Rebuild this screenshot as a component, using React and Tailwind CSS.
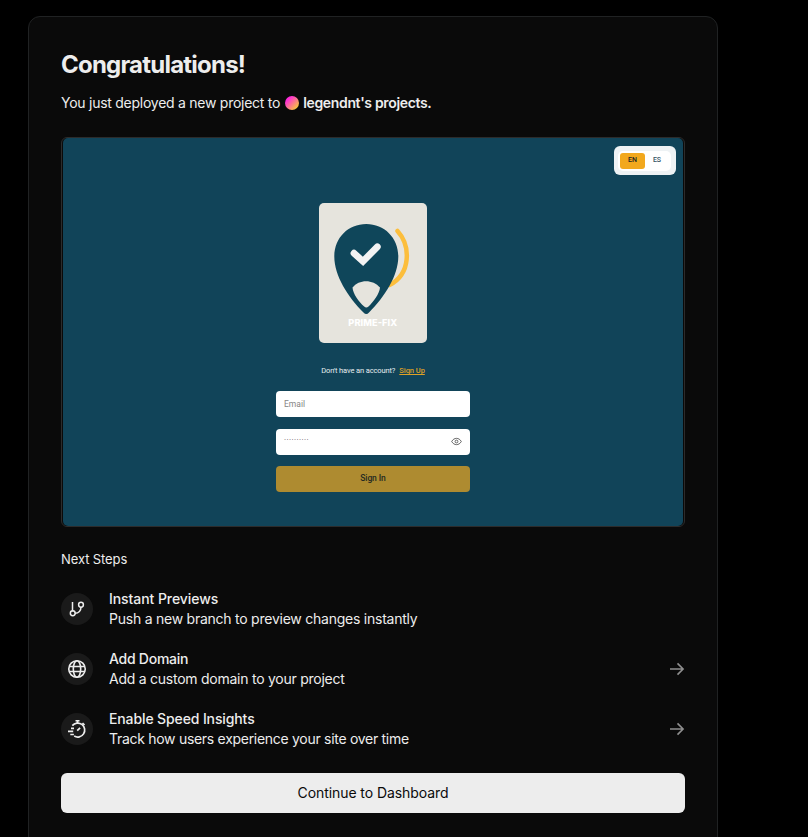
import React from "react";

function BranchIcon() {
  return (
    <svg width="16" height="16" viewBox="0 0 16 16" fill="none" stroke="currentColor" strokeWidth="1.5">
      <path d="M3.5 1v9.5" />
      <circle cx="3.75" cy="12.25" r="2.4" />
      <circle cx="12" cy="3.75" r="2.4" />
      <path d="M12 6C12 9.5 9.8 12.2 6 12.25" />
    </svg>
  );
}

function GlobeIcon() {
  return (
    <svg width="20" height="20" viewBox="0 0 20 20" fill="none" stroke="currentColor" strokeWidth="1.6">
      <circle cx="10" cy="10" r="8.25" />
      <ellipse cx="10" cy="10" rx="3.7" ry="8.25" />
      <path d="M2.3 7.5h15.4M2.3 12.5h15.4" />
    </svg>
  );
}

function StopwatchIcon() {
  return (
    <svg width="20" height="20" viewBox="0 0 20 20" fill="none" stroke="currentColor" strokeWidth="1.7">
      <path d="M8.5 1.75h4M10.5 1.75v2.5M15.5 4l2 2M10.2 11.7l2.9-2.9" />
      <path d="M5.3 6.6A7 7 0 1 1 7.2 17.1" />
      <path d="M4 9.3h3M1 12.3h5.2M3.3 15.5h3.6" />
    </svg>
  );
}

function ArrowIcon() {
  return (
    <svg width="16" height="16" viewBox="0 0 16 16" fill="none" stroke="#8f8f8f" strokeWidth="1.6">
      <path d="M1 8h13.5M8.5 2.4l5.6 5.6-5.6 5.6" />
    </svg>
  );
}

function Logo() {
  return (
    <svg width="108" height="140" viewBox="0 0 108 140" className="block">
      <rect width="108" height="140" rx="5" fill="#e6e4dd" />
      <path d="M78.5 28C92 43 92 71 70.5 82" fill="none" stroke="#fcbe3c" strokeWidth="4.5" strokeLinecap="round" />
      <path d="M47.3 21C29 21 15.3 35 15.3 53.5C15.3 73 29 94 44.5 109.5Q47.3 112.5 50 109.5C65.5 94 79.3 73 79.3 53.5C79.3 35 65.5 21 47.3 21Z" fill="#0f465a" />
      <path d="M35 50.2l9 8.2 14.3-14.6" fill="none" stroke="#f3f3f3" strokeWidth="6.8" strokeLinecap="round" />
      <path d="M33.5 84.5C40 76 54 76 61 84.5C60.5 91 54 99 49.5 103.5Q47.3 105.5 45.2 103.5C40 99 34 91 33.5 84.5Z" fill="#e6e4dd" />
      <text x="53.8" y="122.5" textAnchor="middle" textLength="49" fill="#ffffff" fontFamily="Inter, sans-serif" fontSize="9.2" fontWeight="800">PRIME-FIX</text>
    </svg>
  );
}

const steps = [
  { title: "Instant Previews", text: "Push a new branch to preview changes instantly", icon: <BranchIcon />, arrow: false, titleGap: "tracking-[-0.07px]", textGap: "tracking-[-0.24px]" },
  { title: "Add Domain", text: "Add a custom domain to your project", icon: <GlobeIcon />, arrow: true, titleGap: "tracking-[-0.25px]", textGap: "tracking-[-0.25px]" },
  { title: "Enable Speed Insights", text: "Track how users experience your site over time", icon: <StopwatchIcon />, arrow: true, titleGap: "tracking-[-0.12px]", textGap: "tracking-[-0.29px]" },
];

function Preview() {
  return (
    <div className="mt-[22px] h-[390px] rounded-md border border-[#2c2c2c] px-px">
      <div className="relative flex h-full flex-col items-center overflow-hidden rounded-[5px] bg-[#114459] pt-[65px] font-['Roboto',sans-serif]">
        <div className="absolute right-[7px] top-[8px] flex h-[29px] w-[62px] items-center justify-center rounded-[6px] bg-[#eef2f4]">
          <div className="mr-px flex h-[20px] w-[53px] items-center rounded-[5px] bg-white p-[2px] text-[7px] font-medium">
            <span className="flex h-[16px] w-[25px] items-center justify-center rounded-[3px] bg-[#f2a81d] text-[#222]">EN</span>
            <span className="flex h-[16px] flex-1 items-center justify-center text-[#345464]">ES</span>
          </div>
        </div>
        <Logo />
        <div className="mt-[22px] flex h-[12px] items-center gap-[4px] whitespace-nowrap text-[7.5px] text-[#e6edf0]">
          <span className="tracking-[-0.12px]">Don't have an account?</span>
          <span className="font-medium tracking-[-0.05px] text-[#dfa126] underline">Sign Up</span>
        </div>
        <div className="mt-[14px] flex h-[26px] w-[194px] shrink-0 items-center rounded-[4px] bg-white px-[8px] text-[8.5px] text-[#858585]">Email</div>
        <div className="mt-[11.5px] flex h-[26px] w-[194px] items-center justify-between rounded-[4px] bg-white px-[8px] text-[8px] text-[#555]">
          <span className="-mt-[3px] tracking-[0.4px]">··········</span>
          <svg width="11" height="9" viewBox="0 0 11 9" fill="none" stroke="#555" strokeWidth="0.9">
            <path d="M.7 4.5C3 .3 8 .3 10.3 4.5C8 8.7 3 8.7.7 4.5Z" />
            <circle cx="5.5" cy="4.5" r="1.4" />
          </svg>
        </div>
        <div className="mt-[11.5px] flex h-[26px] w-[194px] items-center justify-center rounded-[4px] bg-[#ae8b30] pb-px text-[8.5px] font-medium tracking-[-0.1px] text-[#252a22]">Sign In</div>
      </div>
    </div>
  );
}

export default function App() {
  return (
    <div className="h-[837px] overflow-hidden bg-black pl-[28px] pt-[16px] font-['Inter',sans-serif] text-[#ededed]">
      <div className="h-[860px] w-[690px] rounded-xl border border-[#202223] bg-[#0a0a0a] p-8">
        <h1 className="h-8 whitespace-nowrap text-2xl font-bold tracking-[-0.78px]">Congratulations!</h1>
        <p className="mt-[10px] flex h-6 items-center whitespace-nowrap text-sm">
          <span className="tracking-[-0.26px]">You just deployed a new project to</span>
          <span className="ml-[5px] mr-1 size-[14px] rounded-full bg-[linear-gradient(135deg,#ff28dc_20%,#f5dc28_95%)]" />
          <span className="font-semibold tracking-[-0.34px]">legendnt's projects.</span>
        </p>
        <Preview />
        <h2 className="mt-[22px] h-5 whitespace-nowrap text-[13px] leading-5"><span className="tracking-[-0.1px]">Next Steps</span></h2>
        <div className="mt-[20px] flex flex-col gap-5">
          {steps.map((step) => (
            <div key={step.title} className="flex h-10 items-center">
              <span className="flex size-8 items-center justify-center rounded-full bg-[#1a1a1a]">{step.icon}</span>
              <div className="ml-4 flex flex-1 flex-col items-start whitespace-nowrap text-sm leading-5">
                <span className={`font-medium ${step.titleGap}`}>{step.title}</span>
                <span className={step.textGap}>{step.text}</span>
              </div>
              {step.arrow && <ArrowIcon />}
            </div>
          ))}
        </div>
        <button className="mt-6 flex h-10 w-full items-center justify-center rounded-md bg-[#ededed] text-sm tracking-[-0.08px] text-[#0a0a0a]">
          <span>Continue to Dashboard</span>
        </button>
      </div>
    </div>
  );
}
